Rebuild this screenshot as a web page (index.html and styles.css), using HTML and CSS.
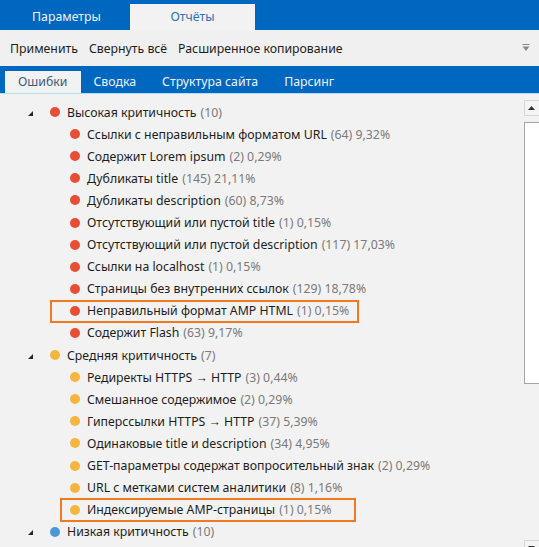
FILE: index.html
```html
<!DOCTYPE html>
<html lang="ru">
<head>
<meta charset="utf-8">
<title>Отчёты</title>
<link rel="stylesheet" href="styles.css">
</head>
<body>
<div class="app">
  <div class="topbar">
    <div class="toptab">Параметры</div>
    <div class="toptab active">Отчёты</div>
  </div>
  <div class="toolbar">
    <span class="tool">Применить</span>
    <span class="tool">Свернуть всё</span>
    <span class="tool">Расширенное копирование</span>
    <span class="spacer"></span>
    <svg class="menu-arrow" width="8" height="8" viewBox="0 0 8 8"><rect x="0.5" y="0" width="7" height="1" fill="#8a8a8a"/><path d="M0.5 2.5 H7.5 L4 7 Z" fill="#8a8a8a"/></svg>
  </div>
  <div class="subtabs">
    <div class="subtab active">Ошибки</div>
    <div class="subtab">Сводка</div>
    <div class="subtab">Структура сайта</div>
    <div class="subtab">Парсинг</div>
  </div>
  <div class="content">
    <div class="tree">
      <div class="row l0"><span class="tri"></span><span class="dot red"></span><span class="name">Высокая критичность</span><span class="cnt">(10)</span></div>
      <div class="row l1"><span class="dot red"></span><span class="name">Ссылки с неправильным форматом URL</span><span class="cnt">(64) 9,32%</span></div>
      <div class="row l1"><span class="dot red"></span><span class="name">Содержит Lorem ipsum</span><span class="cnt">(2) 0,29%</span></div>
      <div class="row l1"><span class="dot red"></span><span class="name">Дубликаты title</span><span class="cnt">(145) 21,11%</span></div>
      <div class="row l1"><span class="dot red"></span><span class="name">Дубликаты description</span><span class="cnt">(60) 8,73%</span></div>
      <div class="row l1"><span class="dot red"></span><span class="name">Отсутствующий или пустой title</span><span class="cnt">(1) 0,15%</span></div>
      <div class="row l1"><span class="dot red"></span><span class="name">Отсутствующий или пустой description</span><span class="cnt">(117) 17,03%</span></div>
      <div class="row l1"><span class="dot red"></span><span class="name">Ссылки на localhost</span><span class="cnt">(1) 0,15%</span></div>
      <div class="row l1"><span class="dot red"></span><span class="name">Страницы без внутренних ссылок</span><span class="cnt">(129) 18,78%</span></div>
      <div class="row l1"><span class="dot red"></span><span class="name">Неправильный формат AMP HTML</span><span class="cnt">(1) 0,15%</span></div>
      <div class="row l1"><span class="dot red"></span><span class="name">Содержит Flash</span><span class="cnt">(63) 9,17%</span></div>
      <div class="row l0"><span class="tri"></span><span class="dot yellow"></span><span class="name">Средняя критичность</span><span class="cnt">(7)</span></div>
      <div class="row l1"><span class="dot yellow"></span><span class="name">Редиректы HTTPS → HTTP</span><span class="cnt">(3) 0,44%</span></div>
      <div class="row l1"><span class="dot yellow"></span><span class="name">Смешанное содержимое</span><span class="cnt">(2) 0,29%</span></div>
      <div class="row l1"><span class="dot yellow"></span><span class="name">Гиперссылки HTTPS → HTTP</span><span class="cnt">(37) 5,39%</span></div>
      <div class="row l1"><span class="dot yellow"></span><span class="name">Одинаковые title и description</span><span class="cnt">(34) 4,95%</span></div>
      <div class="row l1"><span class="dot yellow"></span><span class="name">GET-параметры содержат вопросительный знак</span><span class="cnt">(2) 0,29%</span></div>
      <div class="row l1"><span class="dot yellow"></span><span class="name">URL с метками систем аналитики</span><span class="cnt">(8) 1,16%</span></div>
      <div class="row l1"><span class="dot yellow"></span><span class="name">Индексируемые AMP-страницы</span><span class="cnt">(1) 0,15%</span></div>
      <div class="row l0"><span class="tri"></span><span class="dot blue"></span><span class="name">Низкая критичность</span><span class="cnt">(10)</span></div>
      <div class="mark mark1"></div>
      <div class="mark mark2"></div>
    </div>
    <div class="scrollbar">
      <div class="sbtn up"><svg width="7" height="4" viewBox="0 0 7 4"><path d="M0 4 L3.5 0 L7 4 Z" fill="#333"/></svg></div>
      <div class="thumb"></div>
      <div class="track"></div>
      <div class="sbtn down"><svg width="7" height="4" viewBox="0 0 7 4"><path d="M0 0 L7 0 L3.5 4 Z" fill="#333"/></svg></div>
    </div>
  </div>
</div>
</body>
</html>
```

FILE: styles.css
```css
* { box-sizing: border-box; }
html, body { margin: 0; padding: 0; }
body {
  width: 539px;
  height: 547px;
  overflow: hidden;
  background: #f2f2f2;
  font-family: "Noto Sans", "Open Sans", sans-serif;
  font-size: 12.3px;
  color: #1e1e1e;
}
.app { display: flex; flex-direction: column; height: 547px; }

.topbar {
  display: flex;
  align-items: flex-end;
  height: 30px;
  background: #0067c0;
  padding-left: 3px;
}
.toptab {
  height: 26px;
  line-height: 26px;
  color: #eef4fb;
  text-align: center;
  width: 127px;
}
.toptab.active {
  background: #f2f2f2;
  color: #2f6fb3;
  width: 125px;
}

.toolbar {
  display: flex;
  align-items: center;
  height: 36px;
  background: #f0f0f0;
  padding: 0 9px 0 10px;
  gap: 11px;
}
.tool { color: #1e1e1e; }
.spacer { flex: 1; }
.menu-arrow { margin-top: -1px; }

.subtabs {
  display: flex;
  align-items: flex-end;
  height: 28px;
  background: #0067c0;
  padding-left: 5px;
  border-bottom: 1px solid #a8e4f2;
}
.subtab {
  height: 22px;
  line-height: 22px;
  color: #eef4fb;
  padding: 0 13px;
}
.subtab.active {
  background: #f2f2f2;
  color: #3e5c7c;
}

.content {
  flex: 1;
  display: flex;
  min-height: 0;
}
.tree {
  position: relative;
  flex: 1;
  padding-top: 7px;
}
.row {
  display: flex;
  align-items: center;
  height: 22.1px;
  white-space: nowrap;
}
.row.l0 { padding-left: 28px; }
.row.l1 { padding-left: 70px; }
.tri {
  width: 0; height: 0;
  border-left: 5px solid transparent;
  border-bottom: 5px solid #262626;
  margin-right: 17px;
  margin-top: 2px;
}
.dot {
  width: 10px; height: 10px;
  border-radius: 50%;
  margin-right: 7px;
  flex: none;
}
.dot.red { background: #e94e35; }
.dot.yellow { background: #f6b53f; }
.dot.blue { background: #4b98d8; }
.cnt { color: #7a7a7a; margin-left: 4px; }

.mark {
  position: absolute;
  border: 2px solid #f07a1f;
}
.mark1 { left: 50px; top: 206px; width: 309px; height: 23px; }
.mark2 { left: 60px; top: 404px; width: 296px; height: 24px; }

.scrollbar {
  width: 15px;
  display: flex;
  flex-direction: column;
  padding-top: 6px;
}
.sbtn {
  height: 16px;
  border: 1px solid #d6d6d6;
  border-right: none;
  display: flex;
  align-items: center;
  justify-content: center;
  padding-right: 2px;
  background: #f4f4f4;
}
.thumb {
  margin-top: 6px;
  height: 262px;
  background: #ffffff;
  border: 1px solid #a6a6a6;
  border-right: none;
}
.track { flex: 1; }
.sbtn.down { margin-bottom: -9px; }
```
